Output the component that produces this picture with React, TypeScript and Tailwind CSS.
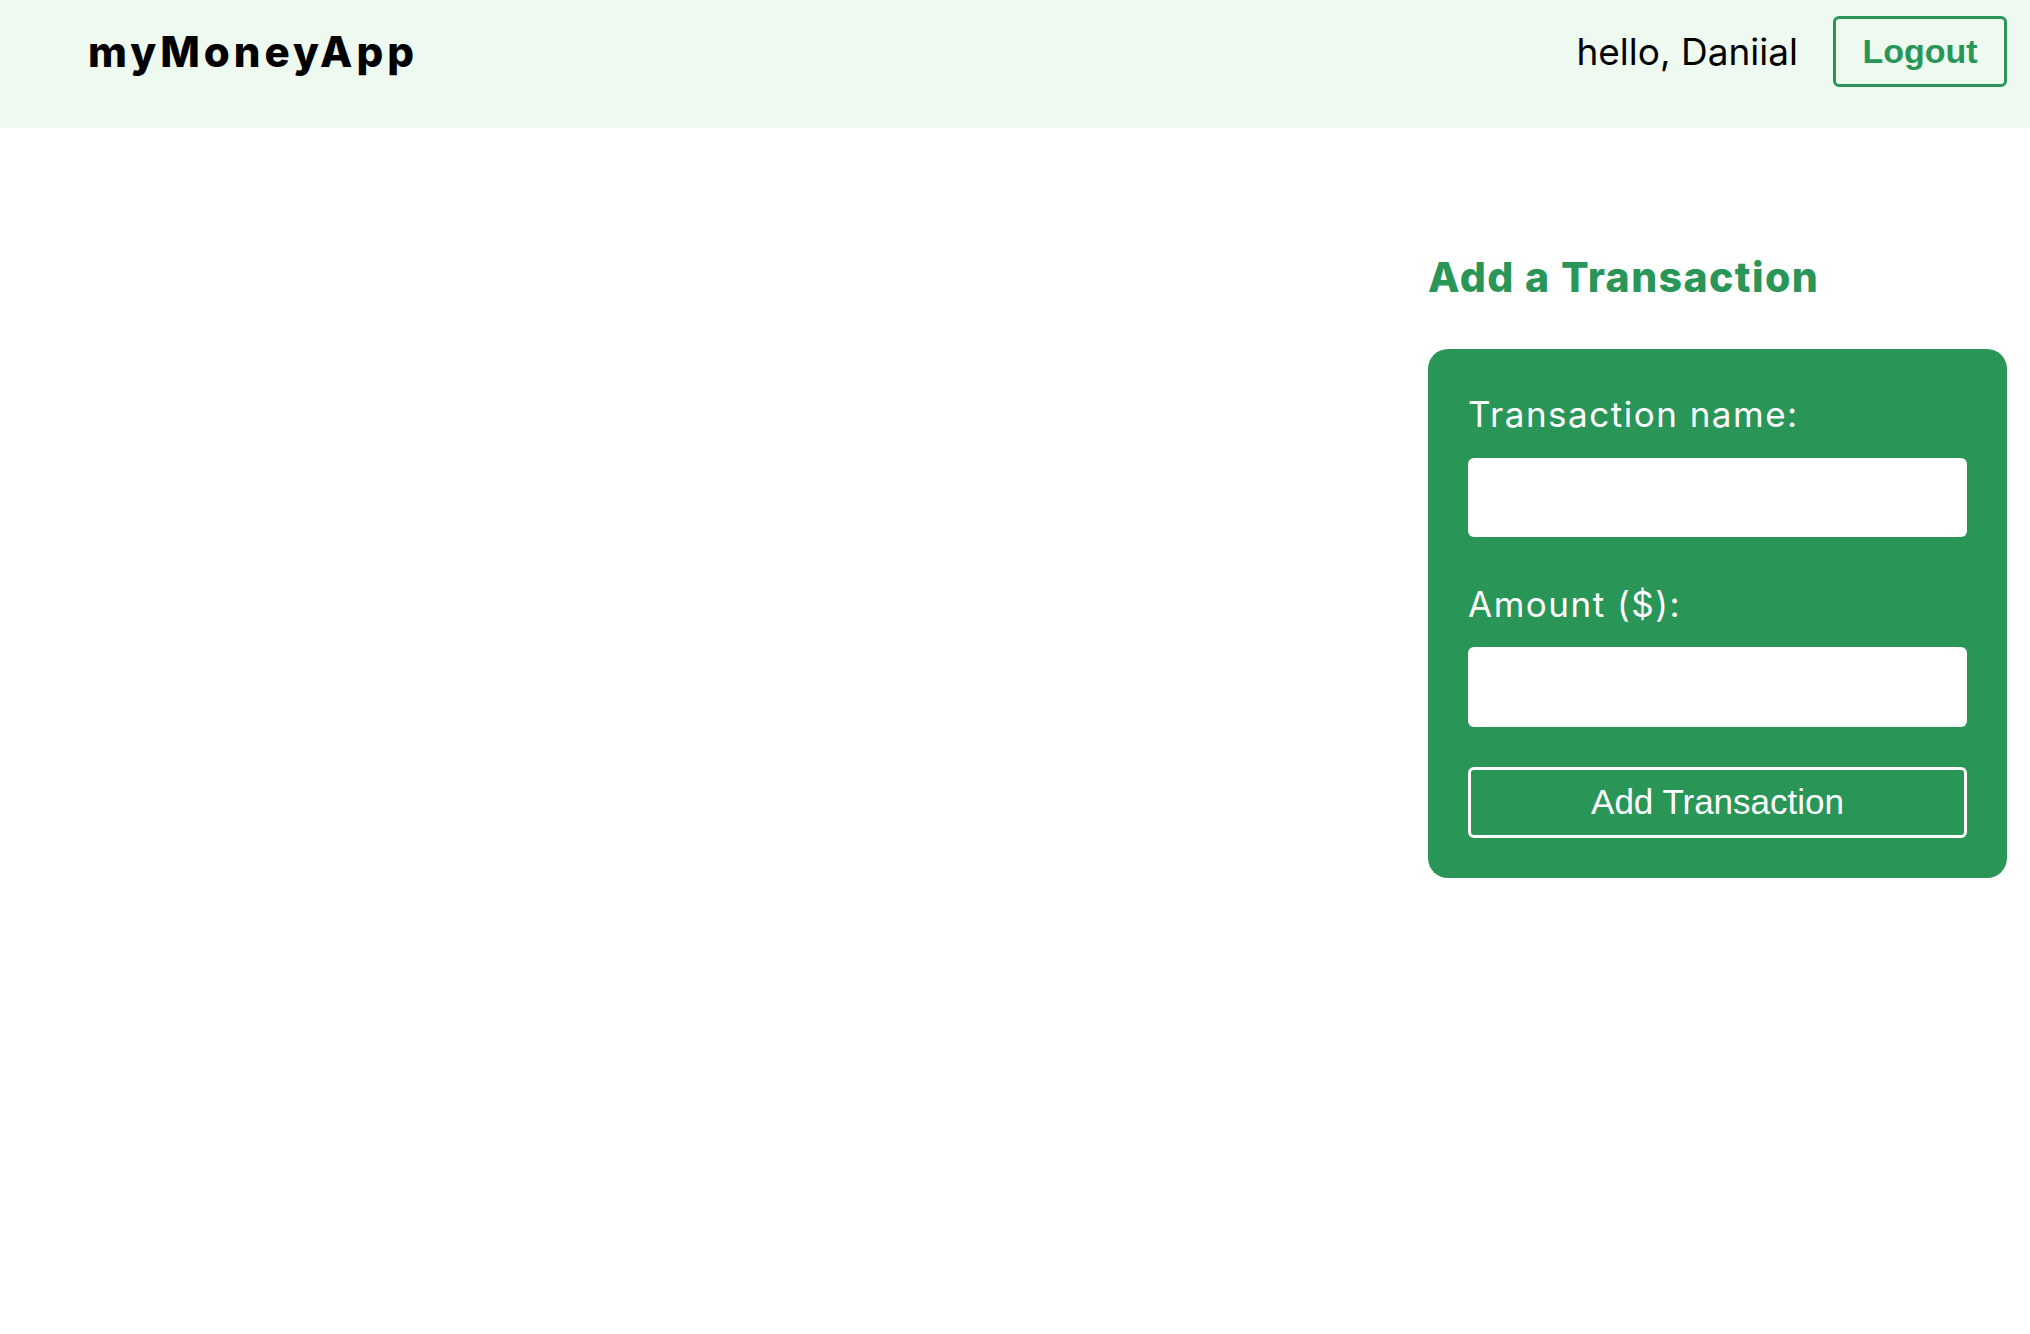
const Navbar = () => {
    return (
        <nav className="h-[128px] bg-[#eef9ef] pt-[16px] pl-[88px] pr-[23px]">
            <div className="flex h-[71px] items-center justify-between">
                <h1 className="font-['Inter',sans-serif] text-[42px] font-extrabold leading-none tracking-[4px] text-black">
                    myMoneyApp
                </h1>
                <div className="flex items-center gap-[35px]">
                    <p className="font-['Inter',sans-serif] text-[37px] leading-none text-black">
                        hello, Daniial
                    </p>
                    <button className="h-[71px] w-[174px] rounded-[6px] border-[3px] border-[#299658] font-['Liberation_Sans',Arial,sans-serif] text-[34px] font-bold text-[#299658]">
                        Logout
                    </button>
                </div>
            </div>
        </nav>
    );
};

const TransactionForm = () => {
    return (
        <aside className="w-[579px]">
            <h2 className="mt-[129px] font-['Inter',sans-serif] text-[41px] font-extrabold leading-none tracking-[1.4px] text-[#299658]">
                Add a Transaction
            </h2>
            <form className="mt-[51px] flex flex-col rounded-[20px] bg-[#299658] px-[40px] pt-[48px] pb-[40px]">
                <label className="font-['Inter',sans-serif] text-[35px] leading-none tracking-[1.5px] text-white">
                    Transaction name:
                </label>
                <input type="text" className="mt-[26px] h-[79px] w-full rounded-[6px] bg-white outline-none" />
                <label className="mt-[50px] font-['Inter',sans-serif] text-[35px] leading-none tracking-[1.5px] text-white">
                    Amount ($):
                </label>
                <input type="number" className="mt-[25px] h-[80px] w-full rounded-[6px] bg-white outline-none" />
                <button
                    type="button"
                    className="mt-[40px] h-[71px] w-full rounded-[6px] border-[3px] border-white font-['Liberation_Sans',Arial,sans-serif] text-[35px] text-white"
                >
                    Add Transaction
                </button>
            </form>
        </aside>
    );
};

export default function App() {
    return (
        <div className="min-h-screen w-full bg-white">
            <Navbar />
            <main className="flex justify-end pr-[23px]">
                <TransactionForm />
            </main>
        </div>
    );
}
